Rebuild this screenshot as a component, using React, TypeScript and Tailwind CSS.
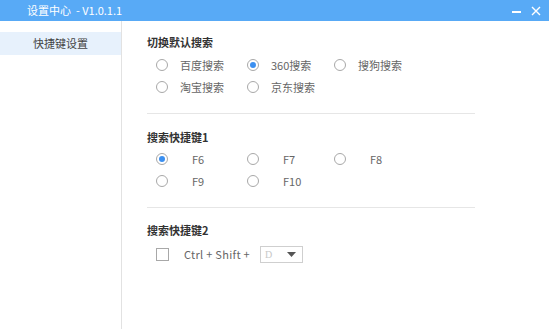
const font = { fontFamily: '"Noto Sans CJK SC", "Noto Sans", sans-serif' };

function Radio({ checked }: { checked?: boolean }) {
  return (
    <span className="flex h-[12px] w-[12px] shrink-0 items-center justify-center rounded-full border border-[#a8a8a8] bg-white">
      {checked && <span className="h-[6px] w-[6px] rounded-full bg-[#3b8ff0]" />}
    </span>
  );
}

function Option({ label, checked, gap = 'gap-[12px]', width }: { label: string; checked?: boolean; gap?: string; width: string }) {
  return (
    <div className={`flex h-[22px] items-center ${gap} ${width}`}>
      <Radio checked={checked} />
      <span className="text-[11px] text-[#666]">{label}</span>
    </div>
  );
}

export default function App() {
  return (
    <div className="flex h-[329px] w-[549px] flex-col bg-white" style={font}>
      {/* Title bar */}
      <div className="flex h-[21px] items-center bg-[#58aaf6] pr-[8px] text-white">
        <span className="ml-[27px] text-[11px] leading-none">设置中心&nbsp;&nbsp;- V1.0.1.1</span>
        <div className="ml-auto flex items-center gap-[10px]">
          <span className="mt-[2px] block h-[2px] w-[9px] bg-white" />
          <svg width="10" height="10" viewBox="0 0 10 10">
            <path d="M1 1l8 8M9 1l-8 8" stroke="white" strokeWidth="1.4" />
          </svg>
        </div>
      </div>

      <div className="flex flex-1">
        {/* Sidebar */}
        <div className="w-[122px] shrink-0 border-r border-[#e2e2e2] pt-[11px]">
          <div className="flex h-[23px] w-[121px] items-center justify-center bg-[#e7f1fc] text-[11px] text-[#444]">
            快捷键设置
          </div>
        </div>

        {/* Content */}
        <div className="flex flex-col pl-[25px] pt-[13px]">
          <div className="h-[16px] text-[11px] font-bold leading-[16px] text-[#333]">切换默认搜索</div>
          <div className="mt-[4px] pl-[9px]">
            <div className="flex">
              <Option label="百度搜索" width="w-[91px]" />
              <Option label="360搜索" checked width="w-[87px]" />
              <Option label="搜狗搜索" width="w-[90px]" />
            </div>
            <div className="flex">
              <Option label="淘宝搜索" width="w-[91px]" />
              <Option label="京东搜索" width="w-[87px]" />
            </div>
          </div>
          <div className="mt-[15px] h-px w-[328px] bg-[#e6e6e6]" />

          <div className="mt-[15px] h-[16px] text-[11px] font-bold leading-[16px] text-[#333]">搜索快捷键1</div>
          <div className="mt-[3px] pl-[9px]">
            <div className="flex">
              <Option label="F6" checked gap="gap-[24px]" width="w-[91px]" />
              <Option label="F7" gap="gap-[24px]" width="w-[87px]" />
              <Option label="F8" gap="gap-[24px]" width="w-[90px]" />
            </div>
            <div className="flex">
              <Option label="F9" gap="gap-[24px]" width="w-[91px]" />
              <Option label="F10" gap="gap-[24px]" width="w-[87px]" />
            </div>
          </div>
          <div className="mt-[15px] h-px w-[328px] bg-[#e6e6e6]" />

          <div className="mt-[14px] h-[16px] text-[11px] font-bold leading-[16px] text-[#333]">搜索快捷键2</div>
          <div className="mt-[5px] flex h-[22px] items-center pl-[9px]">
            <span className="h-[13px] w-[13px] border border-[#a8a8a8]" />
            <span className="ml-[15px] text-[11px] tracking-[0.3px] text-[#666]">Ctrl + Shift +</span>
            <div className="ml-[10px] flex h-[17px] w-[43px] items-center border border-[#cfcfcf] pl-[4px] pr-[6px]">
              <span className="text-[10px] text-[#c8c8c8]" style={{ fontFamily: '"Liberation Serif", serif' }}>D</span>
              <svg className="ml-auto" width="9" height="5" viewBox="0 0 9 5">
                <path d="M0 0h9L4.5 5z" fill="#555" />
              </svg>
            </div>
          </div>
        </div>
      </div>
    </div>
  );
}
